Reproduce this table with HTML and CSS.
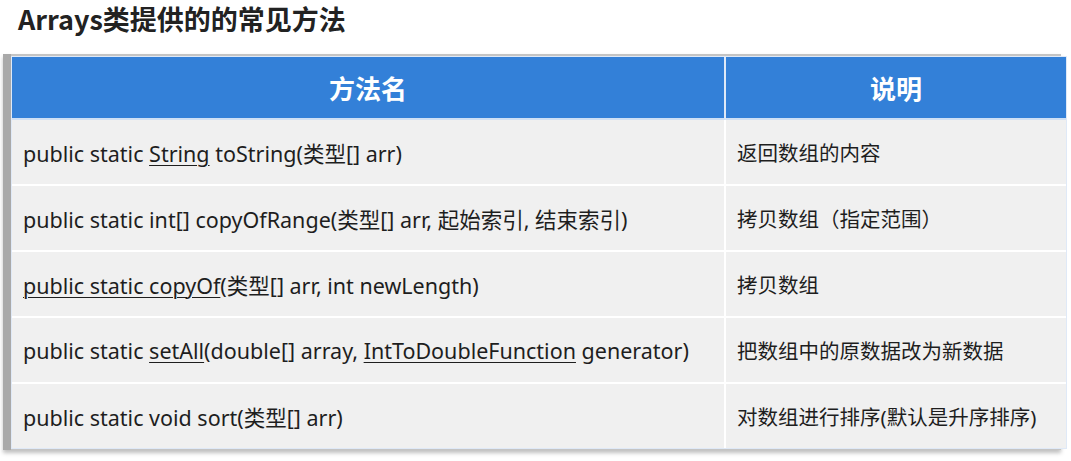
FILE: index.html
```html
<!DOCTYPE html>
<html lang="zh">
<head>
<meta charset="utf-8">
<link rel="stylesheet" href="styles.css">
</head>
<body>
<h1 class="title">Arrays类提供的的常见方法</h1>
<div class="frame">
  <table class="methods">
    <thead>
      <tr><th class="col-name">方法名</th><th class="col-desc">说明</th></tr>
    </thead>
    <tbody>
      <tr><td>public static <u>String</u> toString(类型[] arr)</td><td class="desc">返回数组的内容</td></tr>
      <tr><td>public static int[] copyOfRange(类型[] arr, 起始索引, 结束索引)</td><td class="desc">拷贝数组（指定范围）</td></tr>
      <tr><td><u>public static copyOf</u>(类型[] arr, int newLength)</td><td class="desc">拷贝数组</td></tr>
      <tr><td>public static <u>setAll</u>(double[] array, <u>IntToDoubleFunction</u> generator)</td><td class="desc">把数组中的原数据改为新数据</td></tr>
      <tr><td>public static void sort(类型[] arr)</td><td class="desc">对数组进行排序(默认是升序排序)</td></tr>
    </tbody>
  </table>
</div>
</body>
</html>
```
FILE: styles.css
```css
html, body {
  margin: 0;
  padding: 0;
  background: #fff;
}
body {
  width: 1071px;
  height: 461px;
  overflow: hidden;
  font-family: "Noto Sans", "Noto Sans CJK SC", sans-serif;
}
.title {
  margin: 0;
  padding: 3px 0 0 18px;
  height: 53px;
  box-sizing: border-box;
  font-size: 27px;
  line-height: 32px;
  font-weight: 700;
  color: #222;
  font-family: "Noto Sans CJK SC", "Noto Sans", sans-serif;
}
.frame {
  margin: 1px 2px 0 3px;
  padding: 2px 2px 1px 0;
  border-left: 8px solid #a9a9a9;
  background: #c4c4c4;
  box-shadow: 0 3px 4px rgba(0,0,0,0.25);
  width: 1058px;
  box-sizing: border-box;
}
.methods {
  width: 1056px;
  border-collapse: separate;
  border-spacing: 0;
  background: #fff;
  border: 1px solid #dfe9f7;
  table-layout: fixed;
}
.methods th {
  background: #3380d8;
  color: #fff;
  font-family: "Noto Sans CJK SC", sans-serif;
  font-size: 26px;
  font-weight: 700;
  height: 61px;
  padding: 0;
  text-align: center;
  border-bottom: 2px solid #cfe0f5;
}
.methods .col-name {
  width: 712px;
  border-right: 2px solid #dfe9f7;
}
.methods td {
  background: #f0f0f0;
  height: 64px;
  padding: 0 0 0 11px;
  font-size: 21.5px;
  color: #1e1e1e;
  border-bottom: 2px solid #fff;
  white-space: nowrap;
}
.methods td.desc {
  font-size: 20.5px;
}
.methods td:first-child {
  border-right: 2px solid #fff;
}
.methods tbody tr:last-child td {
  border-bottom: none;
}
.methods u {
  text-decoration-thickness: 1px;
  text-underline-offset: 3px;
}
```
